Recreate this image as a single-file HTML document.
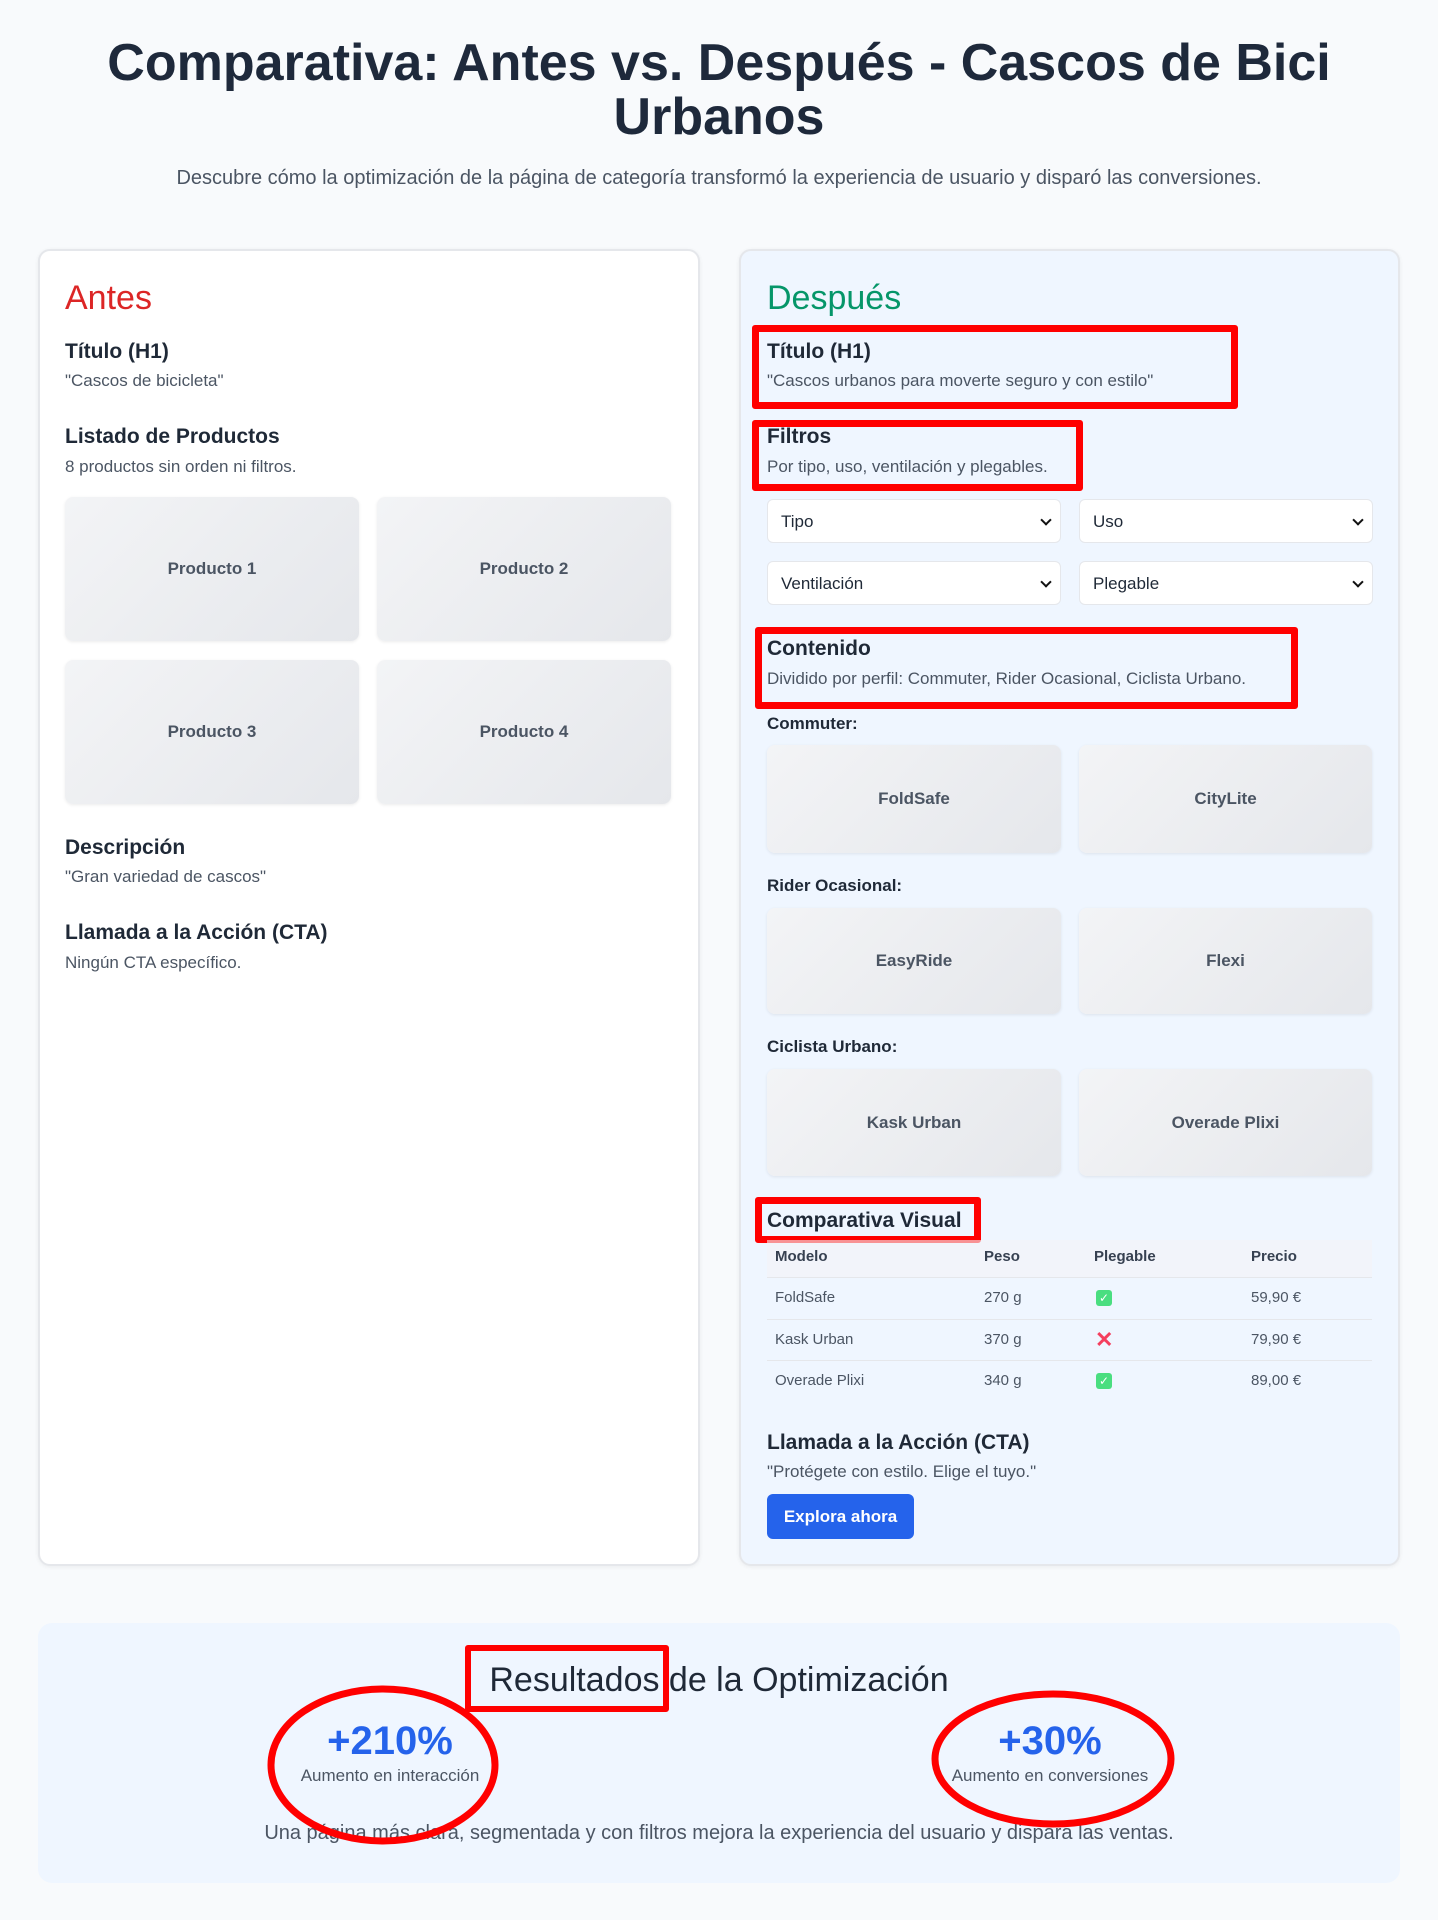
<!DOCTYPE html>
<html><head><meta charset="utf-8"><style>
*{box-sizing:border-box;margin:0;padding:0}
body{width:1438px;height:1920px;background:#f8fafc;font-family:"Liberation Sans",sans-serif;color:#1f2937;position:relative;overflow:hidden}
.a{position:absolute;white-space:nowrap}
h1{position:absolute;left:0;width:1438px;top:36px;text-align:center;font-size:52px;line-height:54px;font-weight:700;color:#1e293b}
.card{position:absolute;top:249px;height:1317px;border:2px solid #e5e7eb;border-radius:12px;box-shadow:0 1px 4px rgba(0,0,0,.06)}
.h{font-size:21px;font-weight:700;color:#1f2937}
.p{font-size:17px;color:#4b5563}
.box{position:absolute;border-radius:8px;background:linear-gradient(135deg,#f3f4f6,#e5e7eb);box-shadow:0 1px 3px rgba(0,0,0,.08);display:flex;align-items:center;justify-content:center;font-weight:700;font-size:17px;color:#4b5563}
.sel{position:absolute;height:44px;width:294px;background:#fff;border:1px solid #e5e7eb;border-radius:6px;font-size:17px;padding:12px 13px;color:#1f2937}
.sel:after{content:"";position:absolute;right:10px;top:16px;width:6px;height:6px;border-right:2px solid #111;border-bottom:2px solid #111;transform:rotate(45deg)}
.red{position:absolute;border:7px solid #f00;border-radius:3px}
.lbl{font-size:17px;font-weight:700;color:#1f2937}
.td{position:absolute;font-size:15px;color:#4b5563}
.th{position:absolute;font-size:15px;font-weight:700;color:#374151}
.line{position:absolute;left:767px;width:605px;height:1px;background:#e5e7eb}
</style></head><body>
<h1>Comparativa: Antes vs. Después - Cascos de Bici<br>Urbanos</h1>
<div class="a" style="left:0;width:1438px;text-align:center;top:167px;font-size:20px;color:#4b5563">Descubre cómo la optimización de la página de categoría transformó la experiencia de usuario y disparó las conversiones.</div>

<div class="card" style="left:38px;width:662px;background:#fff"></div>
<div class="card" style="left:739px;width:661px;background:#eff6ff"></div>

<div class="a" style="left:65px;top:279px;font-size:34px;color:#dc2626">Antes</div>
<div class="a h" style="left:65px;top:340px">Título (H1)</div>
<div class="a p" style="left:65px;top:371px">"Cascos de bicicleta"</div>
<div class="a h" style="left:65px;top:425px">Listado de Productos</div>
<div class="a p" style="left:65px;top:457px">8 productos sin orden ni filtros.</div>
<div class="box" style="left:65px;top:497px;width:294px;height:144px">Producto 1</div>
<div class="box" style="left:377px;top:497px;width:294px;height:144px">Producto 2</div>
<div class="box" style="left:65px;top:660px;width:294px;height:144px">Producto 3</div>
<div class="box" style="left:377px;top:660px;width:294px;height:144px">Producto 4</div>
<div class="a h" style="left:65px;top:836px">Descripción</div>
<div class="a p" style="left:65px;top:867px">"Gran variedad de cascos"</div>
<div class="a h" style="left:65px;top:921px">Llamada a la Acción (CTA)</div>
<div class="a p" style="left:65px;top:953px">Ningún CTA específico.</div>

<div class="a" style="left:767px;top:279px;font-size:34px;color:#059669">Después</div>
<div class="a h" style="left:767px;top:340px">Título (H1)</div>
<div class="a p" style="left:767px;top:371px">"Cascos urbanos para moverte seguro y con estilo"</div>
<div class="red" style="left:752px;top:325px;width:486px;height:84px"></div>
<div class="a h" style="left:767px;top:425px">Filtros</div>
<div class="a p" style="left:767px;top:457px">Por tipo, uso, ventilación y plegables.</div>
<div class="red" style="left:752px;top:420px;width:331px;height:71px"></div>
<div class="sel" style="left:767px;top:499px">Tipo</div>
<div class="sel" style="left:1079px;top:499px">Uso</div>
<div class="sel" style="left:767px;top:561px">Ventilación</div>
<div class="sel" style="left:1079px;top:561px">Plegable</div>
<div class="a h" style="left:767px;top:637px">Contenido</div>
<div class="a p" style="left:767px;top:669px">Dividido por perfil: Commuter, Rider Ocasional, Ciclista Urbano.</div>
<div class="red" style="left:755px;top:627px;width:543px;height:82px"></div>
<div class="a lbl" style="left:767px;top:714px">Commuter:</div>
<div class="box" style="left:767px;top:745px;width:294px;height:108px">FoldSafe</div>
<div class="box" style="left:1079px;top:745px;width:293px;height:108px">CityLite</div>
<div class="a lbl" style="left:767px;top:876px">Rider Ocasional:</div>
<div class="box" style="left:767px;top:908px;width:294px;height:106px">EasyRide</div>
<div class="box" style="left:1079px;top:908px;width:293px;height:106px">Flexi</div>
<div class="a lbl" style="left:767px;top:1037px">Ciclista Urbano:</div>
<div class="box" style="left:767px;top:1069px;width:294px;height:107px">Kask Urban</div>
<div class="box" style="left:1079px;top:1069px;width:293px;height:107px">Overade Plixi</div>
<div class="a h" style="left:767px;top:1209px">Comparativa Visual</div>
<div class="red" style="left:755px;top:1197px;width:226px;height:46px"></div>
<div style="position:absolute;left:767px;top:1240px;width:605px;height:37px;background:#f3f4f6;opacity:.6"></div>
<div class="th" style="left:775px;top:1248px">Modelo</div><div class="th" style="left:984px;top:1248px">Peso</div><div class="th" style="left:1094px;top:1248px">Plegable</div><div class="th" style="left:1251px;top:1248px">Precio</div>
<div class="line" style="top:1277px"></div>
<div class="td" style="left:775px;top:1289px">FoldSafe</div><div class="td" style="left:984px;top:1289px">270 g</div><div class="td" style="left:1096px;top:1290px;width:16px;height:16px;background:#4ade80;border-radius:3px;color:#fff;font-size:12px;text-align:center;line-height:16px">✓</div><div class="td" style="left:1251px;top:1289px">59,90 €</div>
<div class="line" style="top:1319px"></div>
<div class="td" style="left:775px;top:1331px">Kask Urban</div><div class="td" style="left:984px;top:1331px">370 g</div><div class="td" style="left:1095px;top:1327px;color:#f43f5e;font-size:22px;font-weight:700">✕</div><div class="td" style="left:1251px;top:1331px">79,90 €</div>
<div class="line" style="top:1360px"></div>
<div class="td" style="left:775px;top:1372px">Overade Plixi</div><div class="td" style="left:984px;top:1372px">340 g</div><div class="td" style="left:1096px;top:1373px;width:16px;height:16px;background:#4ade80;border-radius:3px;color:#fff;font-size:12px;text-align:center;line-height:16px">✓</div><div class="td" style="left:1251px;top:1372px">89,00 €</div>
<div class="a h" style="left:767px;top:1431px">Llamada a la Acción (CTA)</div>
<div class="a p" style="left:767px;top:1462px">"Protégete con estilo. Elige el tuyo."</div>
<div style="position:absolute;left:767px;top:1494px;width:147px;height:45px;background:#2563eb;border-radius:6px;color:#fff;font-weight:700;font-size:17px;text-align:center;line-height:45px">Explora ahora</div>

<div style="position:absolute;left:38px;top:1623px;width:1362px;height:260px;background:#eff6ff;border-radius:14px"></div>
<div class="a" style="left:0;width:1438px;text-align:center;top:1661px;font-size:34px;color:#1f2937">Resultados de la Optimización</div>
<div class="red" style="left:465px;top:1645px;width:204px;height:67px;border-width:6px"></div>
<div class="a" style="left:290px;width:200px;text-align:center;top:1719px;font-size:40px;font-weight:700;color:#2563eb">+210%</div>
<div class="a" style="left:290px;width:200px;text-align:center;top:1766px;font-size:17px;color:#4b5563">Aumento en interacción</div>
<div class="a" style="left:950px;width:200px;text-align:center;top:1719px;font-size:40px;font-weight:700;color:#2563eb">+30%</div>
<div class="a" style="left:950px;width:200px;text-align:center;top:1766px;font-size:17px;color:#4b5563">Aumento en conversiones</div>
<div class="a" style="left:0;width:1438px;text-align:center;top:1822px;font-size:20px;color:#4b5563">Una página más clara, segmentada y con filtros mejora la experiencia del usuario y dispara las ventas.</div>
<svg style="position:absolute;left:0;top:0" width="1438" height="1920"><ellipse cx="383" cy="1765" rx="112" ry="76" fill="none" stroke="#f00" stroke-width="7"/><ellipse cx="1053" cy="1759" rx="118" ry="65" fill="none" stroke="#f00" stroke-width="7"/></svg>
</body></html>
